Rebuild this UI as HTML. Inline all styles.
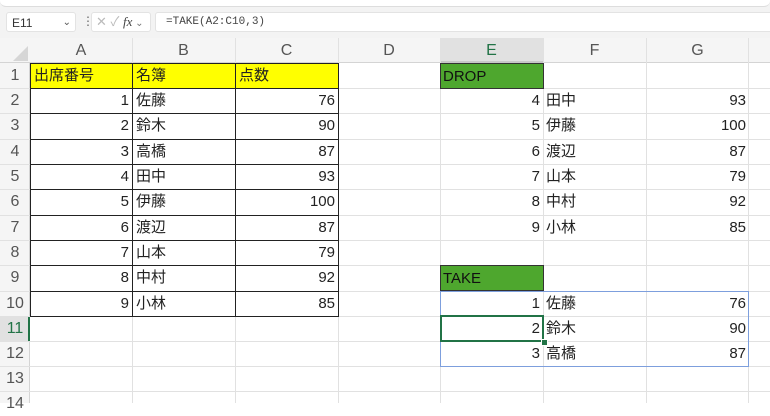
<!DOCTYPE html><html><head><style>
body{margin:0;width:770px;height:403px;overflow:hidden;background:#fff;font-family:"Liberation Sans","Noto Sans CJK JP",sans-serif;position:relative}
.a{position:absolute}
.c{position:absolute;height:25px;line-height:26px;font-size:15px;color:#222;box-sizing:border-box;padding:0 3px;white-space:nowrap}
.r{text-align:right}
.h{position:absolute;font-size:16px;color:#555;text-align:center;line-height:25px}
</style></head><body>
<div class="a" style="left:0;top:0;width:770px;height:38px;background:#f3f3f3"></div>
<div class="a" style="left:0;top:0;width:770px;height:6px;background:#fff;border-bottom:1px solid #ddd;border-radius:0 0 6px 6px"></div>
<div class="a" style="left:6px;top:12px;width:70px;height:20px;background:#fff;border:1px solid #e3e3e3;border-radius:3px;font-size:12px;line-height:20px;color:#333;box-sizing:border-box;padding-left:5px">E11<span style="position:absolute;right:4px;color:#555;font-size:10px">⌄</span></div>
<div class="a" style="left:82px;top:14px;font-size:12px;color:#666">⋮</div>
<div class="a" style="left:91px;top:12px;width:60px;height:20px;background:#fff;border:1px solid #e3e3e3;border-radius:3px;box-sizing:border-box;font-size:13px;line-height:18px;color:#bbb;padding-left:4px">✕ ✓ <i style="color:#444;font-family:'Liberation Serif',serif">fx</i><span style="font-size:10px;color:#777"> ⌄</span></div>
<div class="a" style="left:155px;top:12px;width:620px;height:20px;background:#fff;border:1px solid #e3e3e3;border-radius:3px;box-sizing:border-box;font-family:'Liberation Mono',monospace;font-size:11px;line-height:19px;color:#444;padding-left:10px">=TAKE(A2:C10,3)</div>
<!-- headers -->
<div class="a" style="left:0;top:38px;width:770px;height:25px;background:#f5f5f5;border-bottom:1px solid #d4d4d4;box-sizing:border-box"></div>
<div class="a" style="left:0;top:63px;width:30px;height:340px;background:#f5f5f5;border-right:1px solid #d4d4d4;box-sizing:border-box"></div>
<div class="a" style="left:440px;top:38px;width:103px;height:25px;background:#e1e1e1;border-bottom:2px solid #c8c8c8;box-sizing:border-box"></div>
<div class="a" style="left:0;top:316px;width:30px;height:25px;background:#e1e1e1;border-right:2px solid #217346;box-sizing:border-box"></div>
<svg class="a" style="left:10px;top:46px" width="18" height="15"><polygon points="18,0 18,15 3,15" fill="#d6d6d6"/></svg>
<div class="h" style="left:30px;top:38px;width:102px">A</div>
<div class="h" style="left:132px;top:38px;width:103px">B</div>
<div class="h" style="left:235px;top:38px;width:103px">C</div>
<div class="h" style="left:338px;top:38px;width:102px">D</div>
<div class="h" style="left:440px;top:38px;width:103px;color:#217346">E</div>
<div class="h" style="left:543px;top:38px;width:103px">F</div>
<div class="h" style="left:646px;top:38px;width:103px">G</div>
<!-- column lines -->
<div class="a" style="left:132px;top:38px;width:1px;height:365px;background:#e1e1e1"></div>
<div class="a" style="left:235px;top:38px;width:1px;height:365px;background:#e1e1e1"></div>
<div class="a" style="left:338px;top:38px;width:1px;height:365px;background:#e1e1e1"></div>
<div class="a" style="left:440px;top:38px;width:1px;height:365px;background:#e1e1e1"></div>
<div class="a" style="left:543px;top:38px;width:1px;height:365px;background:#e1e1e1"></div>
<div class="a" style="left:646px;top:38px;width:1px;height:365px;background:#e1e1e1"></div>
<div class="a" style="left:748px;top:38px;width:1px;height:365px;background:#e1e1e1"></div>
<div class="a" style="left:0;top:88px;width:770px;height:1px;background:#e1e1e1"></div>
<div class="a" style="left:0;top:113px;width:770px;height:1px;background:#e1e1e1"></div>
<div class="a" style="left:0;top:139px;width:770px;height:1px;background:#e1e1e1"></div>
<div class="a" style="left:0;top:164px;width:770px;height:1px;background:#e1e1e1"></div>
<div class="a" style="left:0;top:189px;width:770px;height:1px;background:#e1e1e1"></div>
<div class="a" style="left:0;top:215px;width:770px;height:1px;background:#e1e1e1"></div>
<div class="a" style="left:0;top:240px;width:770px;height:1px;background:#e1e1e1"></div>
<div class="a" style="left:0;top:265px;width:770px;height:1px;background:#e1e1e1"></div>
<div class="a" style="left:0;top:291px;width:770px;height:1px;background:#e1e1e1"></div>
<div class="a" style="left:0;top:316px;width:770px;height:1px;background:#e1e1e1"></div>
<div class="a" style="left:0;top:341px;width:770px;height:1px;background:#e1e1e1"></div>
<div class="a" style="left:0;top:366px;width:770px;height:1px;background:#e1e1e1"></div>
<div class="a" style="left:0;top:391px;width:770px;height:1px;background:#e1e1e1"></div>
<!-- row numbers -->
<div class="h" style="left:0;top:63px;width:30px">1</div>
<div class="h" style="left:0;top:88px;width:30px">2</div>
<div class="h" style="left:0;top:113px;width:30px">3</div>
<div class="h" style="left:0;top:139px;width:30px">4</div>
<div class="h" style="left:0;top:164px;width:30px">5</div>
<div class="h" style="left:0;top:189px;width:30px">6</div>
<div class="h" style="left:0;top:215px;width:30px">7</div>
<div class="h" style="left:0;top:240px;width:30px">8</div>
<div class="h" style="left:0;top:265px;width:30px">9</div>
<div class="h" style="left:0;top:291px;width:30px">10</div>
<div class="h" style="left:0;top:316px;width:30px;color:#217346">11</div>
<div class="h" style="left:0;top:341px;width:30px">12</div>
<div class="h" style="left:0;top:366px;width:30px">13</div>
<div class="h" style="left:0;top:391px;width:30px">14</div>
<!-- table A -->
<div class="a" style="left:30px;top:63px;width:308px;height:25px;background:#ffff00"></div>
<div class="a" style="left:30px;top:63px;width:309px;height:254px;border:1px solid #222;box-sizing:border-box"></div>
<div class="a" style="left:132px;top:63px;width:1px;height:254px;background:#222"></div>
<div class="a" style="left:235px;top:63px;width:1px;height:254px;background:#222"></div>
<div class="a" style="left:30px;top:88px;width:308px;height:1px;background:#222"></div>
<div class="a" style="left:30px;top:113px;width:308px;height:1px;background:#222"></div>
<div class="a" style="left:30px;top:139px;width:308px;height:1px;background:#222"></div>
<div class="a" style="left:30px;top:164px;width:308px;height:1px;background:#222"></div>
<div class="a" style="left:30px;top:189px;width:308px;height:1px;background:#222"></div>
<div class="a" style="left:30px;top:215px;width:308px;height:1px;background:#222"></div>
<div class="a" style="left:30px;top:240px;width:308px;height:1px;background:#222"></div>
<div class="a" style="left:30px;top:265px;width:308px;height:1px;background:#222"></div>
<div class="a" style="left:30px;top:291px;width:308px;height:1px;background:#222"></div>
<div class="c" style="left:31px;top:63px">出席番号</div><div class="c" style="left:133px;top:63px">名簿</div><div class="c" style="left:236px;top:63px">点数</div>
<div class="c r" style="left:30px;top:88px;width:102px">1</div><div class="c" style="left:133px;top:88px">佐藤</div><div class="c r" style="left:235px;top:88px;width:103px">76</div>
<div class="c r" style="left:30px;top:113px;width:102px">2</div><div class="c" style="left:133px;top:113px">鈴木</div><div class="c r" style="left:235px;top:113px;width:103px">90</div>
<div class="c r" style="left:30px;top:139px;width:102px">3</div><div class="c" style="left:133px;top:139px">高橋</div><div class="c r" style="left:235px;top:139px;width:103px">87</div>
<div class="c r" style="left:30px;top:164px;width:102px">4</div><div class="c" style="left:133px;top:164px">田中</div><div class="c r" style="left:235px;top:164px;width:103px">93</div>
<div class="c r" style="left:30px;top:189px;width:102px">5</div><div class="c" style="left:133px;top:189px">伊藤</div><div class="c r" style="left:235px;top:189px;width:103px">100</div>
<div class="c r" style="left:30px;top:215px;width:102px">6</div><div class="c" style="left:133px;top:215px">渡辺</div><div class="c r" style="left:235px;top:215px;width:103px">87</div>
<div class="c r" style="left:30px;top:240px;width:102px">7</div><div class="c" style="left:133px;top:240px">山本</div><div class="c r" style="left:235px;top:240px;width:103px">79</div>
<div class="c r" style="left:30px;top:265px;width:102px">8</div><div class="c" style="left:133px;top:265px">中村</div><div class="c r" style="left:235px;top:265px;width:103px">92</div>
<div class="c r" style="left:30px;top:291px;width:102px">9</div><div class="c" style="left:133px;top:291px">小林</div><div class="c r" style="left:235px;top:291px;width:103px">85</div>
<!-- DROP -->
<div class="c" style="left:440px;top:63px;width:104px;height:26px;background:#4ea72e;border:1px solid #333;color:#111;padding-left:2px">DROP</div>
<div class="c r" style="left:440px;top:88px;width:103px">4</div><div class="c" style="left:543px;top:88px">田中</div><div class="c r" style="left:646px;top:88px;width:103px">93</div>
<div class="c r" style="left:440px;top:113px;width:103px">5</div><div class="c" style="left:543px;top:113px">伊藤</div><div class="c r" style="left:646px;top:113px;width:103px">100</div>
<div class="c r" style="left:440px;top:139px;width:103px">6</div><div class="c" style="left:543px;top:139px">渡辺</div><div class="c r" style="left:646px;top:139px;width:103px">87</div>
<div class="c r" style="left:440px;top:164px;width:103px">7</div><div class="c" style="left:543px;top:164px">山本</div><div class="c r" style="left:646px;top:164px;width:103px">79</div>
<div class="c r" style="left:440px;top:189px;width:103px">8</div><div class="c" style="left:543px;top:189px">中村</div><div class="c r" style="left:646px;top:189px;width:103px">92</div>
<div class="c r" style="left:440px;top:215px;width:103px">9</div><div class="c" style="left:543px;top:215px">小林</div><div class="c r" style="left:646px;top:215px;width:103px">85</div>
<!-- TAKE -->
<div class="c" style="left:440px;top:265px;width:104px;height:26px;background:#4ea72e;border:1px solid #333;color:#111;padding-left:2px">TAKE</div>
<div class="a" style="left:440px;top:291px;width:309px;height:76px;border:1px solid #7d9fdd;box-sizing:border-box"></div>
<div class="a" style="left:440px;top:315px;width:104px;height:27px;border:2px solid #217346;box-sizing:border-box"></div>
<div class="a" style="left:541px;top:339px;width:5px;height:5px;background:#217346;border:1px solid #fff"></div>
<div class="c r" style="left:440px;top:291px;width:103px">1</div><div class="c" style="left:543px;top:291px">佐藤</div><div class="c r" style="left:646px;top:291px;width:103px">76</div>
<div class="c r" style="left:440px;top:316px;width:103px">2</div><div class="c" style="left:543px;top:316px">鈴木</div><div class="c r" style="left:646px;top:316px;width:103px">90</div>
<div class="c r" style="left:440px;top:341px;width:103px">3</div><div class="c" style="left:543px;top:341px">高橋</div><div class="c r" style="left:646px;top:341px;width:103px">87</div>
</body></html>
